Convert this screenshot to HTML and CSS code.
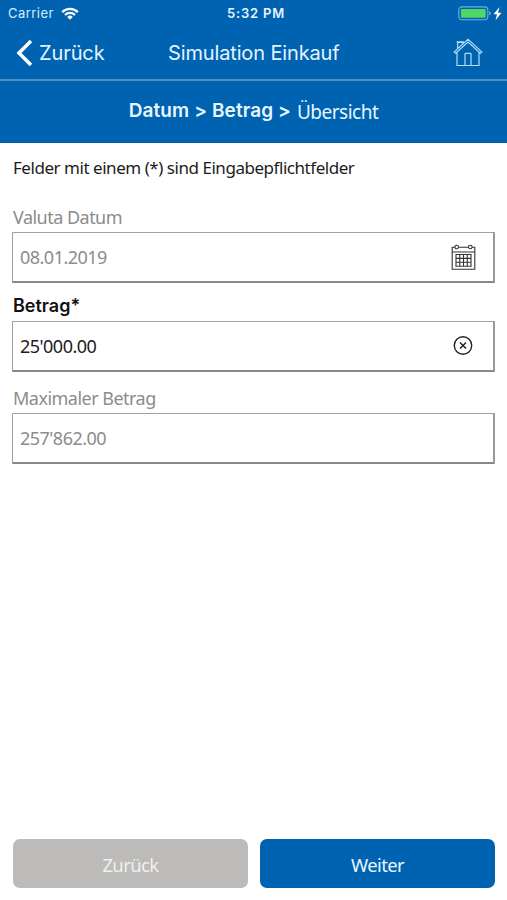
FILE: index.html
```html
<!DOCTYPE html>
<html lang="de">
<head>
<meta charset="utf-8">
<title>Simulation Einkauf</title>
<link rel="stylesheet" href="styles.css">
</head>
<body>
<header class="top">
  <div class="status">
    <div class="status-left"><span class="carrier">Carrier</span>
      <svg class="wifi" width="18" height="13" viewBox="0 0 18 13" fill="none" stroke="#fff" stroke-width="2.3"><path d="M1.2 5.1a11 11 0 0 1 15.6 0M4 8a7.1 7.1 0 0 1 10 0"/><path d="M6.2 9.9a4 4 0 0 1 5.6 0L9 12.8z" fill="#fff" stroke="none"/></svg>
    </div>
    <span class="time">5:32 PM</span>
    <div class="status-right">
      <svg width="46" height="15" viewBox="0 0 46 15"><rect x=".8" y=".9" width="29" height="12.8" rx="3.2" fill="none" stroke="#78add9" stroke-width="1.1"/><rect x="2.9" y="3" width="24.8" height="8.7" rx="1.2" fill="#4cd964"/><path d="M31.2 5.2q1.7.5 1.7 2.1t-1.7 2.1z" fill="#78add9"/><path d="M41.500 1l-6 7.200h3.500l-1.500 6 6-7.500h-3.500z" fill="#fff"/></svg>
    </div>
  </div>
  <nav class="nav">
    <a class="back"><svg width="17" height="28" viewBox="0 0 17 28" fill="none" stroke="#fff" stroke-width="3.5"><path d="M15 2L3 14l12 12"/></svg><span class="back-text">Zurück</span></a>
    <h1 class="title">Simulation Einkauf</h1>
    <svg class="home" width="30" height="29" viewBox="0 0 30 29" fill="none" stroke="#b4dcf5" stroke-width="1.2"><path d="M1.2 13.9L15 1.3l13.8 12.6-1.5 1.4L15 4 2.7 15.3zM4 14.3v13.2h8V16.2q0-.8.8-.8h4.4q.8 0 .8.8v11.3h8V14.3M4.7 10.3V4.3h5.2v1.3M3.600 3.900h7.300M12 27.500h6"/></svg>
  </nav>
  <div class="steps"><span class="step done">Datum &gt; Betrag &gt;</span><span class="step next">Übersicht</span></div>
</header>
<main class="form">
  <p class="hint">Felder mit einem (*) sind Eingabepflichtfelder</p>
  <div class="label date-label"><span>Valuta Datum</span></div>
  <div class="field muted"><span class="value">08.01.2019</span>
    <svg width="25" height="27" viewBox="0 0 25 27" fill="none" stroke="#333" stroke-width="1.1"><path d="M4 3.3H1.2v22h22.600v-22H21M7.500 3.300h10M1.200 8h22.600"/><circle cx="5.700" cy="3" r="1.800"/><circle cx="19.300" cy="3" r="1.800"/><path d="M5 10.500h15v11.700H5zM5 14.400h15M5 18.300h15M8.750 10.500v11.700M12.500 10.500v11.700M16.250 10.500v11.700"/></svg>
  </div>
  <div class="label strong"><span>Betrag*</span></div>
  <div class="field"><span class="value">25'000.00</span>
    <svg class="clear" width="26" height="21" viewBox="0 0 26 21" fill="none" stroke="#222"><circle cx="13" cy="10.500" r="8.700" stroke-width="1.400"/><path d="M10 7.500l6 6M16 7.500l-6 6" stroke-width="1.500"/></svg>
  </div>
  <div class="label max-label"><span>Maximaler Betrag</span></div>
  <div class="field muted"><span class="value">257'862.00</span></div>
</main>
<footer class="actions">
  <button class="button secondary">Zurück</button>
  <button class="button primary">Weiter</button>
</footer>
</body>
</html>
```
FILE: styles.css
```css
* { box-sizing: border-box; }
body { margin: 0; height: 900px; display: flex; flex-direction: column; background: #fff; color: #1c1c1c; font-family: "Noto Sans", sans-serif; font-size: 18px; letter-spacing: -.52px; overflow: hidden; }
svg { display: block; flex: none; }
.top { height: 143px; background: #0063b1; color: #fff; letter-spacing: 0; }
.status { height: 27px; display: grid; grid-template-columns: 1fr auto 1fr; align-items: center; padding: 0 3px 0 8px; font: 13px/27px Inter, sans-serif; }
.status-left { display: flex; align-items: center; gap: 7px; color: #d7edff; }
.carrier { letter-spacing: .45px; }
.time { font-weight: 600; letter-spacing: .8px; color: #e6f4ff; }
.status-right { display: flex; justify-content: flex-end; }
.nav { height: 54px; display: grid; grid-template-columns: 152px 1fr 54px; align-items: center; border-bottom: 2px solid #4a90c9; font-family: Inter, sans-serif; font-size: 20px; color: #e3f3ff; }
.back { display: flex; align-items: center; gap: 6px; padding-left: 16px; letter-spacing: -.1px; }
.title { margin: 0 0 0 16px; font-size: 20px; font-weight: 400; letter-spacing: -.14px; white-space: nowrap; }
.home { margin-top: -1px; }
.steps { height: 62px; display: flex; align-items: center; justify-content: center; gap: 6px; border-bottom: 1px solid #0059a6; color: #e8f6ff; }
.done { font: 600 19px/24px Inter, sans-serif; letter-spacing: .1px; margin-top: -1px; }
.next { font-size: 19px; line-height: 24px; letter-spacing: -.5px; }
.form { flex: 1; padding: 0 12px; }
.hint { margin: 0; padding: 13px 1px 0; height: 55px; font-size: 17px; letter-spacing: -.46px; line-height: 24px; white-space: nowrap; }
.label { height: 38px; padding-left: 1px; display: flex; align-items: flex-end; color: #8c8c8c; line-height: 24px; }
.date-label { height: 34px; padding-bottom: 3px; }
.strong { color: #111; font: 600 18px/24px Inter, sans-serif; letter-spacing: 0; padding-bottom: 3px; }
.max-label { height: 41px; padding-bottom: 3px; }
.field { height: 51px; border: 1px solid #a0a0a0; border-right: 2px solid #999; border-bottom: 2px solid #888; border-radius: 1px; display: flex; align-items: center; justify-content: space-between; padding: 0 17px 0 7px; }
.clear { margin-top: -1px; }
.muted { color: #8c8c8c; }
.actions { display: grid; grid-template-columns: 1fr 1fr; gap: 12px; padding: 0 12px 12px 13px; }
.button { height: 49px; border: 0; border-radius: 7px; color: #fff; font: 18.5px/24px "Noto Sans", sans-serif; letter-spacing: -.6px; padding: 2px 0 0; }
.secondary { background: #bcbbb9; color: #f0f0ef; }
.primary { background: #0063b1; color: #e8f6ff; }
```
